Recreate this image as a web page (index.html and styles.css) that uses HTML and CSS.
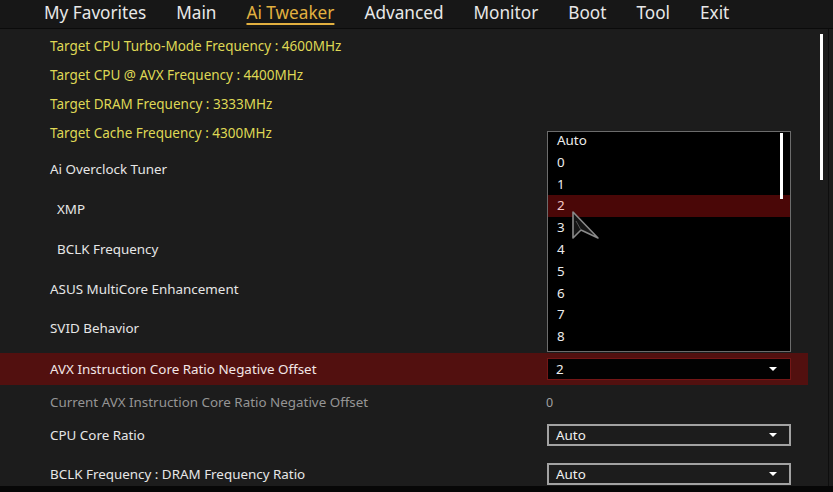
FILE: index.html
```html
<!DOCTYPE html>
<html lang="en">
<head>
    <meta charset="UTF-8">
    <meta name="viewport" content="width=device-width, initial-scale=1.0">
    <title>Ai Tweaker</title>
    <link rel="stylesheet" href="styles.css">
</head>
<body>
    <div class="screen">
        <nav class="menu">
            <span class="menu-item">My Favorites</span>
            <span class="menu-item">Main</span>
            <span class="menu-item active">Ai Tweaker</span>
            <span class="menu-item">Advanced</span>
            <span class="menu-item">Monitor</span>
            <span class="menu-item">Boot</span>
            <span class="menu-item">Tool</span>
            <span class="menu-item">Exit</span>
        </nav>

        <div class="content">
            <div class="list">
                <div class="row info">Target CPU Turbo-Mode Frequency : 4600MHz</div>
                <div class="row info">Target CPU @ AVX Frequency : 4400MHz</div>
                <div class="row info">Target DRAM Frequency : 3333MHz</div>
                <div class="row info">Target Cache Frequency : 4300MHz</div>

                <div class="row setting first"><span class="label">Ai Overclock Tuner</span></div>
                <div class="row setting"><span class="label sub">XMP</span></div>
                <div class="row setting"><span class="label sub">BCLK Frequency</span></div>
                <div class="row setting short"><span class="label">ASUS MultiCore Enhancement</span></div>
                <div class="row setting short"><span class="label">SVID Behavior</span></div>

                <div class="row setting selected">
                    <span class="label">AVX Instruction Core Ratio Negative Offset</span>
                    <div class="select open"><span>2</span><i class="caret"></i></div>
                </div>
                <div class="row setting readonly">
                    <span class="label">Current AVX Instruction Core Ratio Negative Offset</span>
                    <span class="value">0</span>
                </div>
                <div class="row setting ratio">
                    <span class="label">CPU Core Ratio</span>
                    <div class="select"><span>Auto</span><i class="caret"></i></div>
                </div>
                <div class="row setting last">
                    <span class="label">BCLK Frequency : DRAM Frequency Ratio</span>
                    <div class="select"><span>Auto</span><i class="caret"></i></div>
                </div>
            </div>

            <div class="track"><div class="thumb"></div></div>

            <!-- lista aberta do AVX offset -->
            <div class="dropdown">
                <ul>
                    <li>Auto</li>
                    <li>0</li>
                    <li>1</li>
                    <li class="hover">2</li>
                    <li>3</li>
                    <li>4</li>
                    <li>5</li>
                    <li>6</li>
                    <li>7</li>
                    <li>8</li>
                </ul>
                <div class="dropdown-thumb"></div>
            </div>

            <svg class="cursor" width="30" height="30" viewBox="0 0 30 30">
                <polygon points="2,1 27,27 10,19 2,27" fill="#151515" stroke="#8a8a8a" stroke-width="1.6" stroke-linejoin="round"/>
                <polyline points="5,10 10,19" fill="none" stroke="#555" stroke-width="1"/>
            </svg>
        </div>
        <div class="footer"></div>
    </div>
</body>
</html>
```

FILE: styles.css
```css
/* Tela da BIOS */
body {
    margin: 0;
    background: #0a0a0a;
    font-family: "Noto Sans", "Open Sans", sans-serif;
    color: #e6e6e6;
    overflow: hidden;
}
.screen {
    width: 833px;
    height: 492px;
    display: flex;
    flex-direction: column;
    background: #1b1b1b;
}
.menu {
    display: flex;
    gap: 30px;
    height: 29px;
    box-sizing: border-box;
    padding: 0 0 2px 44px;
    align-items: center;
    background: #171717;
    border-bottom: 1px solid #0b0b0b;
    font-size: 17.2px;
    color: #e8e8e8;
}
.menu-item {
    line-height: 22px;
}
.menu-item.active {
    color: #e2b040;
    text-decoration: underline;
    text-underline-offset: 4px;
    text-decoration-thickness: 2px;
}
.content {
    display: flex;
    position: relative;
    height: 457px;
    overflow: hidden;
    background: #1c1c1c;
}
.list {
    width: 808px;
    padding-top: 2px;
}
.row {
    display: flex;
    align-items: center;
    padding-left: 50px;
    box-sizing: border-box;
}
.info {
    height: 29px;
    font-size: 13.5px;
    color: #dfd855;
}
.setting {
    height: 40px;
    font-size: 13.4px;
}
.setting.first {
    margin-top: 2px;
}
.setting.short {
    height: 39px;
}
.label {
    width: 497px;
    flex-shrink: 0;
}
.label.sub {
    padding-left: 7px;
}
.setting.selected {
    margin-top: 6px;
    height: 32px;
    background: #52100f;
    color: #f2e6e6;
}
.setting.readonly {
    height: 34px;
    color: #959595;
}
.setting.ratio {
    height: 32px;
}
.setting.last {
    height: 46px;
}
.value {
    font-size: 12.5px;
    color: #a0a0a0;
    margin-left: -1px;
}
.select {
    width: 244px;
    height: 22px;
    box-sizing: border-box;
    border: 2px solid #a2a2a2;
    display: flex;
    align-items: center;
    justify-content: space-between;
    padding: 0 12px 0 7px;
    color: #f0f0f0;
}
.select.open {
    background: #020202;
    border: 1px solid #741616;
    padding-left: 8px;
    padding-right: 13px;
}
.caret {
    width: 0;
    height: 0;
    border-left: 4px solid transparent;
    border-right: 4px solid transparent;
    border-top: 4px solid #ffffff;
}
.track {
    width: 20px;
    border-right: 1px solid #0e0e0e;
    padding-top: 5px;
}
.thumb {
    margin-left: 12px;
    width: 3px;
    height: 146px;
    background: #ffffff;
}
.dropdown {
    position: absolute;
    left: 547px;
    top: 102px;
    width: 244px;
    height: 221px;
    box-sizing: border-box;
    border: 1px solid #6c6c6c;
    background: #000000;
    overflow: hidden;
    font-size: 13.4px;
}
.dropdown ul {
    list-style: none;
    margin: -2px 0 0 0;
    padding: 0;
}
.dropdown li {
    height: 21.8px;
    line-height: 21.8px;
    padding-left: 9px;
    color: #ececec;
}
.dropdown li.hover {
    background: #4a0707;
    color: #f3c8c8;
}
.dropdown-thumb {
    position: absolute;
    top: 1px;
    right: 7px;
    width: 3px;
    height: 66px;
    background: #ffffff;
}
.cursor {
    position: absolute;
    left: 571px;
    top: 182px;
}
.footer {
    height: 6px;
    background: #070707;
}
```
